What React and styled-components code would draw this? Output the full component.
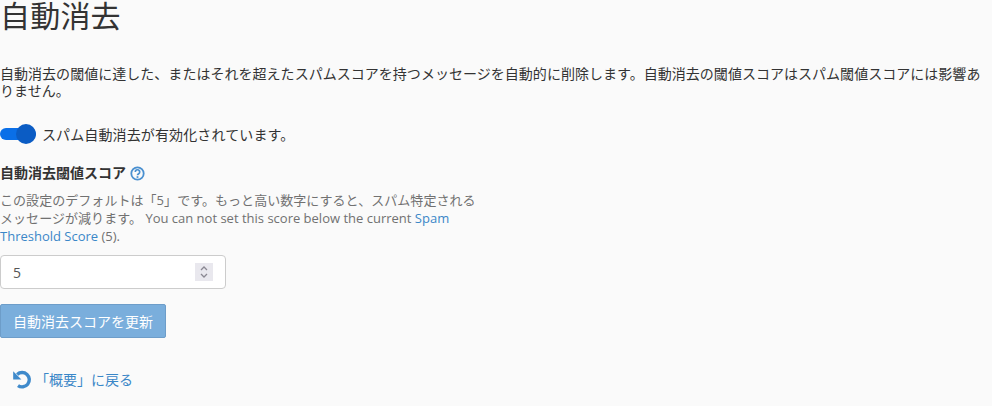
import React from "react";
import styled, { createGlobalStyle } from "styled-components";

const GlobalStyle = createGlobalStyle`
  html, body {
    margin: 0;
    padding: 0;
    background: #fafafa;
    font-family: "Open Sans", "Noto Sans CJK JP", sans-serif;
    font-size: 14px;
    color: #333;
  }
`;

const Page = styled.div`
  display: flex;
  flex-direction: column;
  align-items: flex-start;
  width: 992px;
  height: 406px;
  overflow: hidden;
`;

const Title = styled.h1`
  margin: 0;
  font-size: 30px;
  font-weight: 400;
  line-height: 32px;
  letter-spacing: 0.2px;
  color: #333;
`;

const Intro = styled.p`
  margin: 33px 0 0;
  width: 985px;
  line-height: 17px;
  letter-spacing: 0.03px;
`;

const ToggleRow = styled.div`
  display: flex;
  align-items: center;
  gap: 6px;
  margin-top: 24px;
  height: 22px;
  letter-spacing: 0.12px;
`;

const Toggle = styled.span`
  position: relative;
  display: block;
  width: 36px;
  height: 12px;
  border-radius: 6px;
  background: #0a6fe8;
`;

const Knob = styled.span`
  position: absolute;
  right: 0;
  top: -4px;
  width: 20px;
  height: 20px;
  border-radius: 50%;
  background: #0b5cc4;
`;

const FieldLabel = styled.div`
  display: flex;
  align-items: center;
  gap: 4px;
  margin-top: 18px;
  font-weight: 700;
  line-height: 20px;
`;

const HelpIcon = styled.svg`
  width: 15px;
  height: 15px;
  display: block;
`;

const Help = styled.p`
  margin: 8px 0 0;
  width: 480px;
  font-size: 13px;
  line-height: 18px;
  color: #717171;
`;

const HelpJa = styled.span`
  letter-spacing: 0.05px;
`;

const Link = styled.a`
  color: #3a87c8;
  text-decoration: none;
`;

const InputBox = styled.div`
  display: flex;
  align-items: center;
  justify-content: space-between;
  box-sizing: border-box;
  width: 226px;
  height: 34px;
  margin-top: 10px;
  padding: 0 12px;
  background: #fff;
  border: 1px solid #ccc;
  border-radius: 4px;
  color: #555;
`;

const Spinner = styled.svg`
  width: 18px;
  height: 18px;
  display: block;
  background: #e9e8ee;
`;

const Submit = styled.button`
  box-sizing: border-box;
  width: 166px;
  height: 34px;
  margin-top: 15px;
  padding: 0;
  font: inherit;
  color: #fff;
  background: #7aaedc;
  border: 1px solid #6d9dc9;
  border-radius: 2px;
`;

const BackLink = styled(Link)`
  display: flex;
  align-items: center;
  gap: 2px;
  margin: 31px 0 0 12px;
  line-height: 20px;
`;

const BackIcon = styled.svg`
  width: 21px;
  height: 21px;
  display: block;
`;

export default function App() {
  return (
    <Page>
      <GlobalStyle />
      <Title>自動消去</Title>
      <Intro>
        自動消去の閾値に達した、またはそれを超えたスパムスコアを持つメッセージを自動的に削除します。自動消去の閾値スコアはスパム閾値スコアには影響ありません。
      </Intro>
      <ToggleRow>
        <Toggle>
          <Knob />
        </Toggle>
        スパム自動消去が有効化されています。
      </ToggleRow>
      <FieldLabel>
        自動消去閾値スコア
        <HelpIcon viewBox="0 0 15 15">
          <circle cx="7.5" cy="7.5" r="6.2" fill="none" stroke="#4a90d0" strokeWidth="1.8" />
          <path d="M5.3 6a2.2 2.2 0 1 1 3.4 1.8c-.8.5-1.2.8-1.2 1.5" fill="none" stroke="#4a90d0" strokeWidth="1.7" />
          <rect x="6.6" y="10.2" width="1.8" height="1.7" fill="#4a90d0" />
        </HelpIcon>
      </FieldLabel>
      <Help>
        <HelpJa>この設定のデフォルトは「5」です。もっと高い数字にすると、スパム特定されるメッセージが減ります。</HelpJa> You can not set this score below the current <Link href="#">Spam Threshold Score</Link> (5).
      </Help>
      <InputBox>
        5
        <Spinner viewBox="0 0 18 18">
          <path d="M6 7l3-3 3 3M6 11l3 3 3-3" fill="none" stroke="#8a8892" strokeWidth="1.3" />
        </Spinner>
      </InputBox>
      <Submit>自動消去スコアを更新</Submit>
      <BackLink href="#">
        <BackIcon viewBox="0 0 21 21">
          <path d="M5.2 5.4A7.2 7.2 0 1 1 6 16.6" fill="none" stroke="#3f8acb" strokeWidth="3.4" />
          <path d="M1.2 2.2v8.2H9.4z" fill="#3f8acb" />
        </BackIcon>
        「概要」に戻る
      </BackLink>
    </Page>
  );
}
